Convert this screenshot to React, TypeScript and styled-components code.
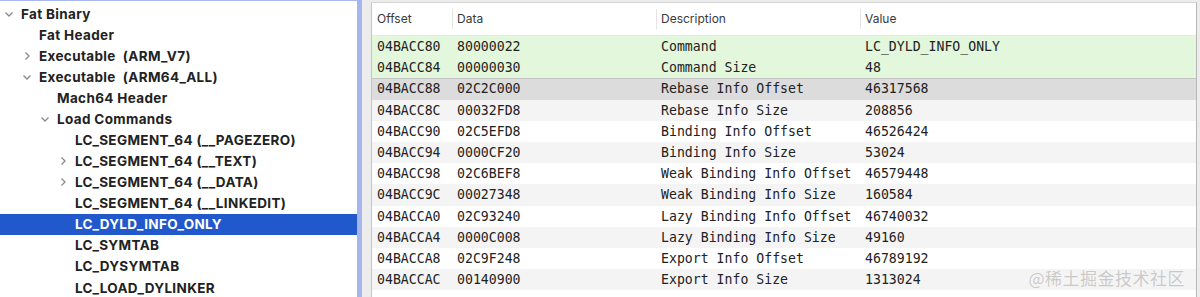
import React from "react";
import styled, { createGlobalStyle } from "styled-components";

const GlobalStyle = createGlobalStyle`
  html, body {
    margin: 0;
    padding: 0;
    background: #ececec;
  }
  #root {
    height: 297px;
  }
`;

type TreeItem = { label: string; level: number; arrow?: "open" | "closed"; selected?: boolean };

const tree: TreeItem[] = [
  { label: "Fat Binary", level: 0, arrow: "open" },
  { label: "Fat Header", level: 1 },
  { label: "Executable\u00a0 (ARM_V7)", level: 1, arrow: "closed" },
  { label: "Executable\u00a0 (ARM64_ALL)", level: 1, arrow: "open" },
  { label: "Mach64 Header", level: 2 },
  { label: "Load Commands", level: 2, arrow: "open" },
  { label: "LC_SEGMENT_64 (__PAGEZERO)", level: 3 },
  { label: "LC_SEGMENT_64 (__TEXT)", level: 3, arrow: "closed" },
  { label: "LC_SEGMENT_64 (__DATA)", level: 3, arrow: "closed" },
  { label: "LC_SEGMENT_64 (__LINKEDIT)", level: 3 },
  { label: "LC_DYLD_INFO_ONLY", level: 3, selected: true },
  { label: "LC_SYMTAB", level: 3 },
  { label: "LC_DYSYMTAB", level: 3 },
  { label: "LC_LOAD_DYLINKER", level: 3 },
];

type Row = [string, string, string, string];

const rows: Row[] = [
  ["04BACC80", "80000022", "Command", "LC_DYLD_INFO_ONLY"],
  ["04BACC84", "00000030", "Command Size", "48"],
  ["04BACC88", "02C2C000", "Rebase Info Offset", "46317568"],
  ["04BACC8C", "00032FD8", "Rebase Info Size", "208856"],
  ["04BACC90", "02C5EFD8", "Binding Info Offset", "46526424"],
  ["04BACC94", "0000CF20", "Binding Info Size", "53024"],
  ["04BACC98", "02C6BEF8", "Weak Binding Info Offset", "46579448"],
  ["04BACC9C", "00027348", "Weak Binding Info Size", "160584"],
  ["04BACCA0", "02C93240", "Lazy Binding Info Offset", "46740032"],
  ["04BACCA4", "0000C008", "Lazy Binding Info Size", "49160"],
  ["04BACCA8", "02C9F248", "Export Info Offset", "46789192"],
  ["04BACCAC", "00140900", "Export Info Size", "1313024"],
];

const Chevron = ({ open }: { open: boolean }) => (
  <svg width="10" height="10" viewBox="0 0 10 10">
    {open ? (
      <polyline points="1.5,3.5 5,7 8.5,3.5" fill="none" stroke="#8a8a8a" strokeWidth="1.3" />
    ) : (
      <polyline points="3.5,1.5 7,5 3.5,8.5" fill="none" stroke="#8a8a8a" strokeWidth="1.3" />
    )}
  </svg>
);

const rowKind = (i: number): "green" | "selected" | "stripe" | "plain" => {
  if (i < 2) return "green";
  if (i === 2) return "selected";
  return i % 2 === 1 ? "stripe" : "plain";
};

const App = () => {
  return (
    <>
      <GlobalStyle />
      <Window>
        <Sidebar>
          {tree.map((item) => (
            <TreeRow key={item.label} $selected={!!item.selected}>
              <Indent $level={item.level} />
              <ArrowSlot>{item.arrow && <Chevron open={item.arrow === "open"} />}</ArrowSlot>
              <TreeLabel>{item.label}</TreeLabel>
            </TreeRow>
          ))}
        </Sidebar>

        <TablePane>
          <HeaderRow>
            <HeaderCell>Offset</HeaderCell>
            <HeaderCell $divider>Data</HeaderCell>
            <HeaderCell $divider>Description</HeaderCell>
            <HeaderCell $divider>Value</HeaderCell>
          </HeaderRow>
          {rows.map((r, i) => (
            <DataRow key={r[0]} $kind={rowKind(i)}>
              {r.map((c, j) => (
                <Cell key={j}>{c}</Cell>
              ))}
            </DataRow>
          ))}
          <Watermark>@稀土掘金技术社区</Watermark>
        </TablePane>
      </Window>
    </>
  );
};

export default App;

const Window = styled.div`
display: flex;
height: 297px;
width: 1200px;
overflow: hidden;
background: #ececec;
`;

const Sidebar = styled.div`
width: 357px;
flex-shrink: 0;
background: #ffffff;
border-top: 1px solid #a9b8ee;
border-right: 5px solid #a5b5ee;
padding-top: 2px;
box-sizing: content-box;
`;

const TreeRow = styled.div<{ $selected: boolean }>`
display: flex;
align-items: center;
height: 21.08px;
background: ${(p) => (p.$selected ? "#2159cc" : "transparent")};
color: ${(p) => (p.$selected ? "#ffffff" : "#222222")};
`;

const Indent = styled.div<{ $level: number }>`
width: ${(p) => 4 + p.$level * 18}px;
flex-shrink: 0;
`;

const ArrowSlot = styled.div`
width: 17px;
display: flex;
align-items: center;
`;

const TreeLabel = styled.span`
font-family: Inter, "Liberation Sans", sans-serif;
font-size: 13.5px;
font-weight: 700;
letter-spacing: 0.35px;
white-space: nowrap;
`;

const TablePane = styled.div`
position: relative;
flex: 1;
margin-left: 9px;
margin-right: 3px;
margin-top: 2px;
background: #ffffff;
border-left: 1px solid #c6c6c6;
border-right: 1px solid #b8b8b8;
border-top: 1px solid #d6d6d6;
`;

const columns = `80px 204px 204px 1fr`;

const HeaderRow = styled.div`
display: grid;
grid-template-columns: ${columns};
height: 32px;
align-items: center;
border-bottom: 1px solid #e8e8e8;
`;

const HeaderCell = styled.div<{ $divider?: boolean }>`
font-family: Inter, "Liberation Sans", sans-serif;
font-size: 12px;
color: #3a3a3a;
padding-left: 4px;
height: 20px;
line-height: 20px;
border-left: 1px solid ${(p) => (p.$divider ? "#e4e4e4" : "transparent")};
`;

const rowBg = {
  green: "#e3f7dc",
  selected: "#dcdcdc",
  stripe: "#f4f4f4",
  plain: "#ffffff",
};

const DataRow = styled.div<{ $kind: keyof typeof rowBg }>`
display: grid;
grid-template-columns: ${columns};
height: 21.2px;
align-items: center;
background: ${(p) => rowBg[p.$kind]};
box-shadow: ${(p) => (p.$kind === "selected" ? "inset 0 1px 0 #c4c4c4" : "none")};
`;

const Cell = styled.div`
font-family: "DejaVu Sans Mono", "Liberation Mono", monospace;
font-size: 13.2px;
color: #222222;
padding-left: 5px;
white-space: nowrap;
`;

const Watermark = styled.div`
position: absolute;
right: 11px;
bottom: 7px;
font-family: "Noto Sans CJK SC", sans-serif;
font-size: 17px;
color: rgba(120, 120, 120, 0.35);
letter-spacing: 0.5px;
`;
